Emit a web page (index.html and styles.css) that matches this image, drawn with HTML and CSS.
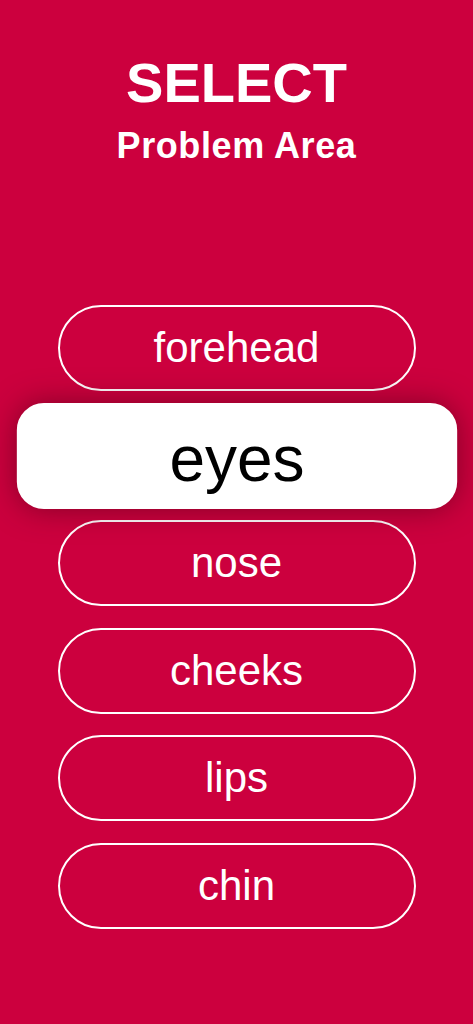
FILE: index.html
```html
<!DOCTYPE html>
<html lang="en">
<head>
<meta charset="utf-8">
<title>Select Problem Area</title>
<link rel="stylesheet" href="styles.css">
</head>
<body>
<main class="screen">
  <header class="heading">
    <h1 class="title">SELECT</h1>
    <h2 class="subtitle">Problem Area</h2>
  </header>
  <ul class="picker">
    <li class="option">forehead</li>
    <li class="option option--selected">eyes</li>
    <li class="option">nose</li>
    <li class="option">cheeks</li>
    <li class="option">lips</li>
    <li class="option">chin</li>
  </ul>
</main>
</body>
</html>
```
FILE: styles.css
```css
* { box-sizing: border-box; }
html, body {
  margin: 0;
  padding: 0;
  background: #cc003e;
}
body {
  font-family: "Liberation Sans", Arial, Helvetica, sans-serif;
  color: #fff;
}
.screen {
  width: 473px;
  height: 1024px;
  overflow: hidden;
  display: flex;
  flex-direction: column;
  align-items: center;
  padding-top: 55px;
}
.heading {
  display: flex;
  flex-direction: column;
  align-items: center;
  gap: 17px;
}
.title {
  margin: 0;
  font-size: 56px;
  line-height: 56px;
  font-weight: 700;
}
.subtitle {
  margin: 0;
  font-size: 36px;
  line-height: 36px;
  font-weight: 700;
  letter-spacing: 0.6px;
}
.picker {
  list-style: none;
  margin: 141px 0 0;
  padding: 0;
  display: flex;
  flex-direction: column;
  align-items: center;
  gap: 21.5px;
}
.option {
  width: 358px;
  height: 86px;
  border: 2.5px solid #fff;
  border-radius: 43px;
  display: flex;
  align-items: center;
  justify-content: center;
  font-size: 42px;
  color: #fff;
}
.option--selected {
  background: #fff;
  color: #000;
  border-color: #fff;
  border-radius: 22px;
  font-size: 52px;
  padding-top: 4px;
  transform: scale(1.23);
  box-shadow: 0 0 24px rgba(60, 0, 15, 0.5);
}
```
